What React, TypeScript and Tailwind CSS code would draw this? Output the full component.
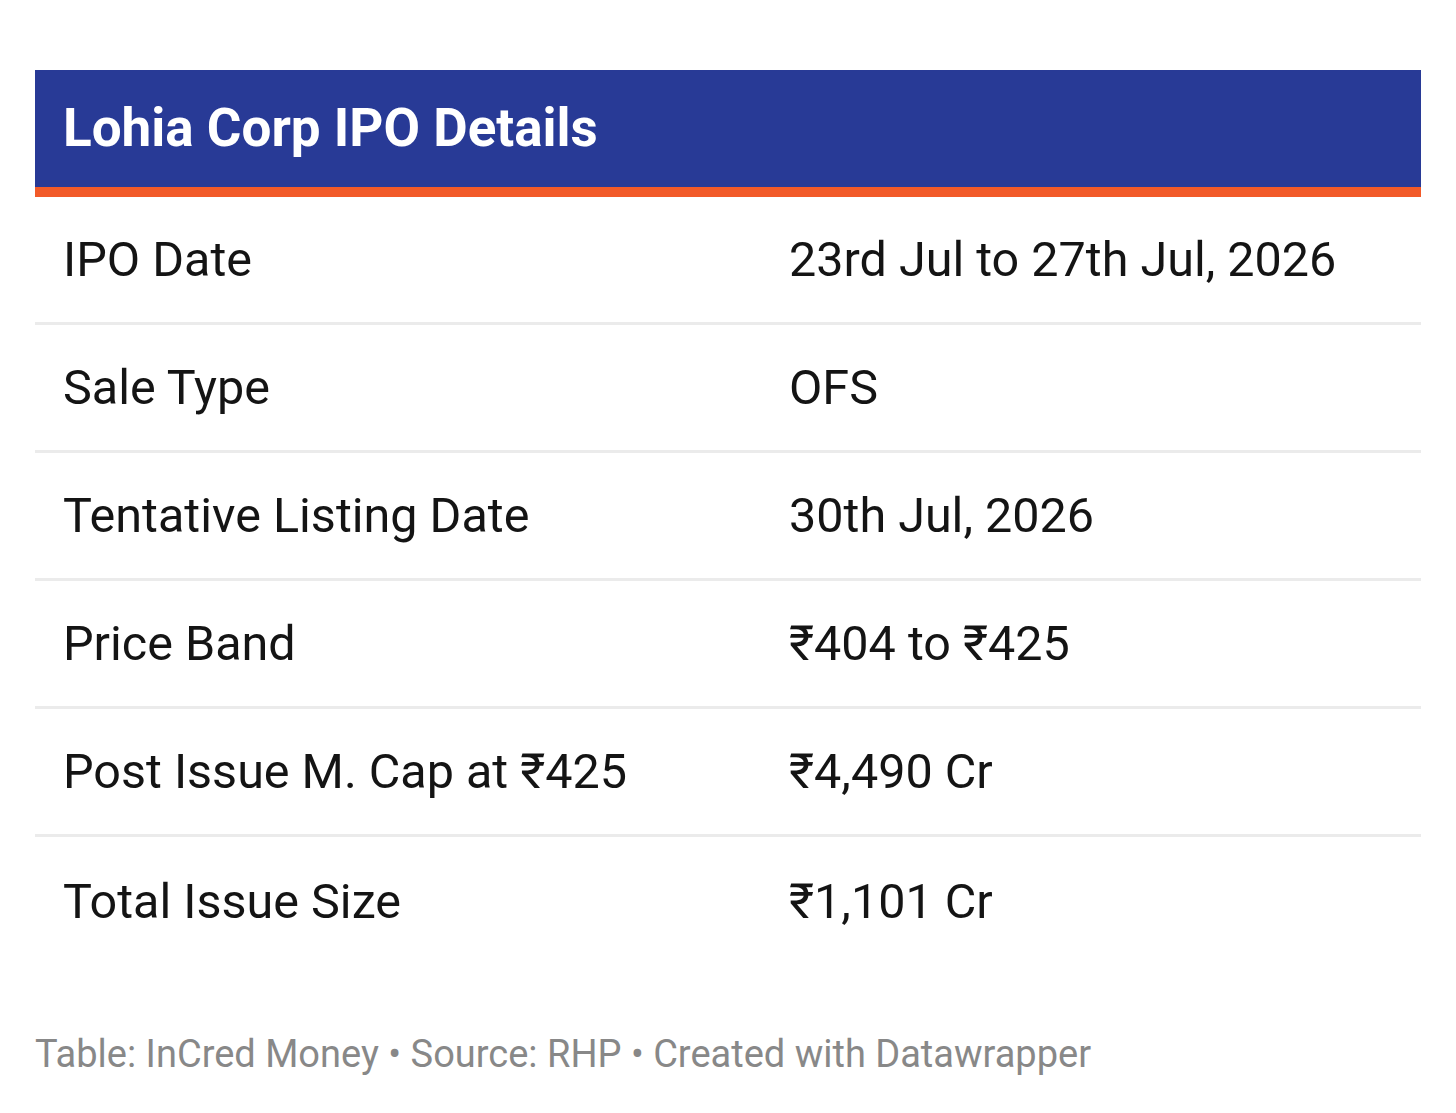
import React from 'react';

const rows = [
  { label: 'IPO Date', value: '23rd Jul to 27th Jul, 2026' },
  { label: 'Sale Type', value: 'OFS' },
  { label: 'Tentative Listing Date', value: '30th Jul, 2026' },
  { label: 'Price Band', value: '₹404 to ₹425' },
  { label: 'Post Issue M. Cap at ₹425', value: '₹4,490 Cr' },
  { label: 'Total Issue Size', value: '₹1,101 Cr' },
];

const App = () => {
  return (
    <div className="min-h-screen bg-white px-[35px] pt-[70px] font-['Roboto','Liberation_Sans',sans-serif]">
      {/* Header */}
      <div className="bg-[#283a96] h-[117px] flex items-center px-[28px] border-b-[10px] border-[#f25a29] box-content">
        <h1 className="text-white font-bold text-[53px] leading-none">Lohia Corp IPO Details</h1>
      </div>

      {/* Rows */}
      <div>
        {rows.map((row, i) => (
          <div
            key={row.label}
            className={`grid grid-cols-[754px_1fr] items-center h-[128px] text-[48.5px] leading-none text-[#141414] ${
              i < rows.length - 1 ? 'border-b-[3px] border-[#ebebeb]' : ''
            }`}
          >
            <div className="pl-[28px] pt-[2px]">{row.label}</div>
            <div className="pt-[2px]">{row.value}</div>
          </div>
        ))}
      </div>

      {/* Footer */}
      <p className="mt-[70px] text-[38px] leading-none text-[#888888]">
        Table: InCred Money • Source: RHP • Created with Datawrapper
      </p>
    </div>
  );
};

export default App;
